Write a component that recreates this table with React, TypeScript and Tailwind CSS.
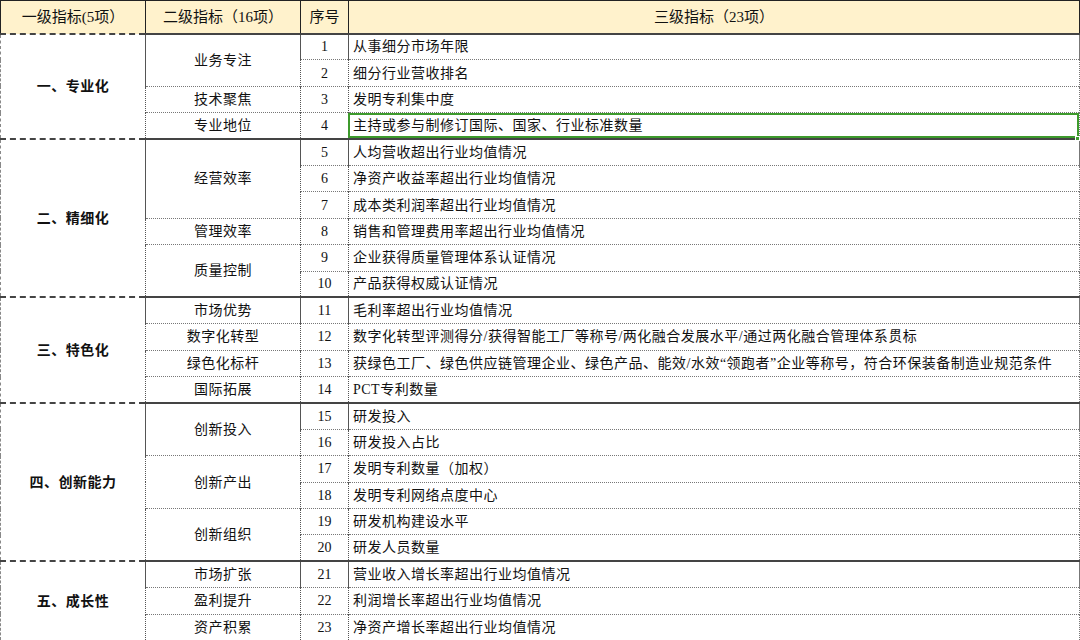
import React from 'react';

type Sub = { name: string; items: string[] };
type Group = { name: string; subs: Sub[] };

const groups: Group[] = [
  {
    name: '一、专业化',
    subs: [
      { name: '业务专注', items: ['从事细分市场年限', '细分行业营收排名'] },
      { name: '技术聚焦', items: ['发明专利集中度'] },
      { name: '专业地位', items: ['主持或参与制修订国际、国家、行业标准数量'] },
    ],
  },
  {
    name: '二、精细化',
    subs: [
      {
        name: '经营效率',
        items: ['人均营收超出行业均值情况', '净资产收益率超出行业均值情况', '成本类利润率超出行业均值情况'],
      },
      { name: '管理效率', items: ['销售和管理费用率超出行业均值情况'] },
      { name: '质量控制', items: ['企业获得质量管理体系认证情况', '产品获得权威认证情况'] },
    ],
  },
  {
    name: '三、特色化',
    subs: [
      { name: '市场优势', items: ['毛利率超出行业均值情况'] },
      { name: '数字化转型', items: ['数字化转型评测得分/获得智能工厂等称号/两化融合发展水平/通过两化融合管理体系贯标'] },
      {
        name: '绿色化标杆',
        items: ['获绿色工厂、绿色供应链管理企业、绿色产品、能效/水效“领跑者”企业等称号，符合环保装备制造业规范条件'],
      },
      { name: '国际拓展', items: ['PCT专利数量'] },
    ],
  },
  {
    name: '四、创新能力',
    subs: [
      { name: '创新投入', items: ['研发投入', '研发投入占比'] },
      { name: '创新产出', items: ['发明专利数量（加权）', '发明专利网络点度中心'] },
      { name: '创新组织', items: ['研发机构建设水平', '研发人员数量'] },
    ],
  },
  {
    name: '五、成长性',
    subs: [
      { name: '市场扩张', items: ['营业收入增长率超出行业均值情况'] },
      { name: '盈利提升', items: ['利润增长率超出行业均值情况'] },
      { name: '资产积累', items: ['净资产增长率超出行业均值情况'] },
    ],
  },
];

const font = { fontFamily: '"Liberation Serif", "Noto Sans CJK SC", serif' };

export default function App() {
  let seq = 0;

  return (
    <div className="w-[1080px] h-[640px] overflow-hidden bg-white text-[#111]" style={font}>
      <table className="w-[1080px] border-collapse table-fixed text-[14px]">
        <colgroup>
          <col className="w-[145px]" />
          <col className="w-[155px]" />
          <col className="w-[48px]" />
          <col />
        </colgroup>
        <thead>
          <tr className="h-[33px] bg-[#fff2cc]">
            <th className="font-normal border border-[#222] text-[15px]">一级指标(5项）</th>
            <th className="font-normal border border-[#222] text-[15px]">二级指标（16项）</th>
            <th className="font-normal border border-[#222] text-[15px]">序号</th>
            <th className="font-normal border border-[#222] text-[15px]">三级指标（23项）</th>
          </tr>
        </thead>
        <tbody className="tracking-[0.5px]">
          {groups.map((g) => {
            const total = g.subs.reduce((n, s) => n + s.items.length, 0);
            let first = true;
            return g.subs.map((s, si) =>
              s.items.map((item, ii) => {
                seq += 1;
                const top = first ? 'border-t-2 border-t-[#444] border-solid' : 'border-t border-t-[#777] border-dotted';
                const isFirst = first;
                first = false;
                const selected = seq === 4;
                return (
                  <tr key={seq} className="h-[26.4px]">
                    {isFirst && (
                      <td
                        rowSpan={total}
                        className="border-l border-l-[#888] border-dashed border-t-2 border-t-[#444] text-center font-bold"
                      >
                        {g.name}
                      </td>
                    )}
                    {ii === 0 && (
                      <td
                        rowSpan={s.items.length}
                        className={`border-l border-l-[#555] border-dotted text-center ${si === 0 ? 'border-t-2 border-t-[#444] border-solid' : 'border-t border-t-[#777] border-dotted'}`}
                      >
                        {s.name}
                      </td>
                    )}
                    <td className={`border-l border-l-[#555] border-dotted text-center tracking-normal ${top}`}>{seq}</td>
                    <td className={`relative border-l border-r border-l-[#555] border-r-[#777] border-dotted pl-[4px] whitespace-nowrap ${top}`}>
                      {item}
                      {selected && (
                        <>
                          <div className="absolute inset-0 -left-[1px] border-2 border-[#3d9a2c] pointer-events-none" />
                          <div className="absolute -right-[1px] -bottom-[3px] w-[5px] h-[5px] bg-[#3d9a2c] border border-white" />
                        </>
                      )}
                    </td>
                  </tr>
                );
              })
            );
          })}
        </tbody>
      </table>
    </div>
  );
}
